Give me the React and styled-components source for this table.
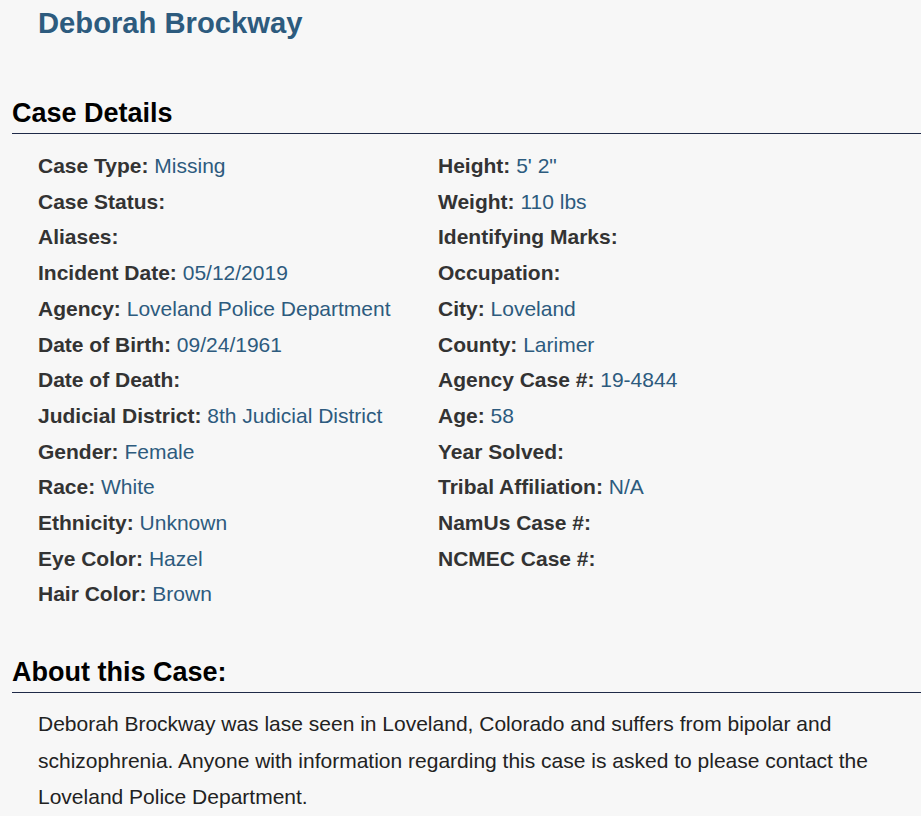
import React from "react";
import styled, { createGlobalStyle } from "styled-components";

const GlobalStyle = createGlobalStyle`
  html, body {
    margin: 0;
    padding: 0;
    background: #f7f7f7;
    font-family: "Liberation Sans", Arial, sans-serif;
    overflow: hidden;
  }
`;

const Page = styled.div`
  padding: 0 0 0 12px;
  color: #333;
`;

const Name = styled.h1`
  margin: 0;
  padding: 5px 0 0 26px;
  font-size: 29.2px;
  line-height: 36px;
  font-weight: bold;
  color: #2d5b7e;
`;

const SectionTitle = styled.h2`
  margin: ${props => props.top}px 0 0;
  padding: 0 0 5px;
  font-size: 27px;
  line-height: 30px;
  font-weight: bold;
  color: #000;
  border-bottom: 1px solid #1f2a48;
`;

const Details = styled.div`
  display: grid;
  grid-template-columns: 400px 1fr;
  padding: 14px 0 0 26px;
`;

const Column = styled.div`
  display: flex;
  flex-direction: column;
`;

const Row = styled.div`
  font-size: 21px;
  line-height: 35.7px;
  white-space: nowrap;
`;

const Label = styled.b`
  color: #333;
`;

const Value = styled.span`
  color: #2d5b7e;
`;

const About = styled.p`
  margin: 0;
  padding: 13px 40px 0 26px;
  font-size: 21px;
  line-height: 36.6px;
  color: #222;
`;

const left = [
  ["Case Type", "Missing"],
  ["Case Status", ""],
  ["Aliases", ""],
  ["Incident Date", "05/12/2019"],
  ["Agency", "Loveland Police Department"],
  ["Date of Birth", "09/24/1961"],
  ["Date of Death", ""],
  ["Judicial District", "8th Judicial District"],
  ["Gender", "Female"],
  ["Race", "White"],
  ["Ethnicity", "Unknown"],
  ["Eye Color", "Hazel"],
  ["Hair Color", "Brown"],
];

const right = [
  ["Height", "5' 2\""],
  ["Weight", "110 lbs"],
  ["Identifying Marks", ""],
  ["Occupation", ""],
  ["City", "Loveland"],
  ["County", "Larimer"],
  ["Agency Case #", "19-4844"],
  ["Age", "58"],
  ["Year Solved", ""],
  ["Tribal Affiliation", "N/A"],
  ["NamUs Case #", ""],
  ["NCMEC Case #", ""],
];

const Field = ({ label, value }) => (
  <Row>
    <Label>{label}:</Label> {value && <Value>{value}</Value>}
  </Row>
);

export default function App() {
  return (
    <Page>
      <GlobalStyle />
      <Name>Deborah Brockway</Name>
      <SectionTitle top={57}>Case Details</SectionTitle>
      <Details>
        <Column>
          {left.map(([l, v]) => <Field key={l} label={l} value={v} />)}
        </Column>
        <Column>
          {right.map(([l, v]) => <Field key={l} label={l} value={v} />)}
        </Column>
      </Details>
      <SectionTitle top={45}>About this Case:</SectionTitle>
      <About>
        Deborah Brockway was lase seen in Loveland, Colorado and suffers from bipolar and schizophrenia.
        Anyone with information regarding this case is asked to please contact the Loveland Police Department.
      </About>
    </Page>
  );
}
